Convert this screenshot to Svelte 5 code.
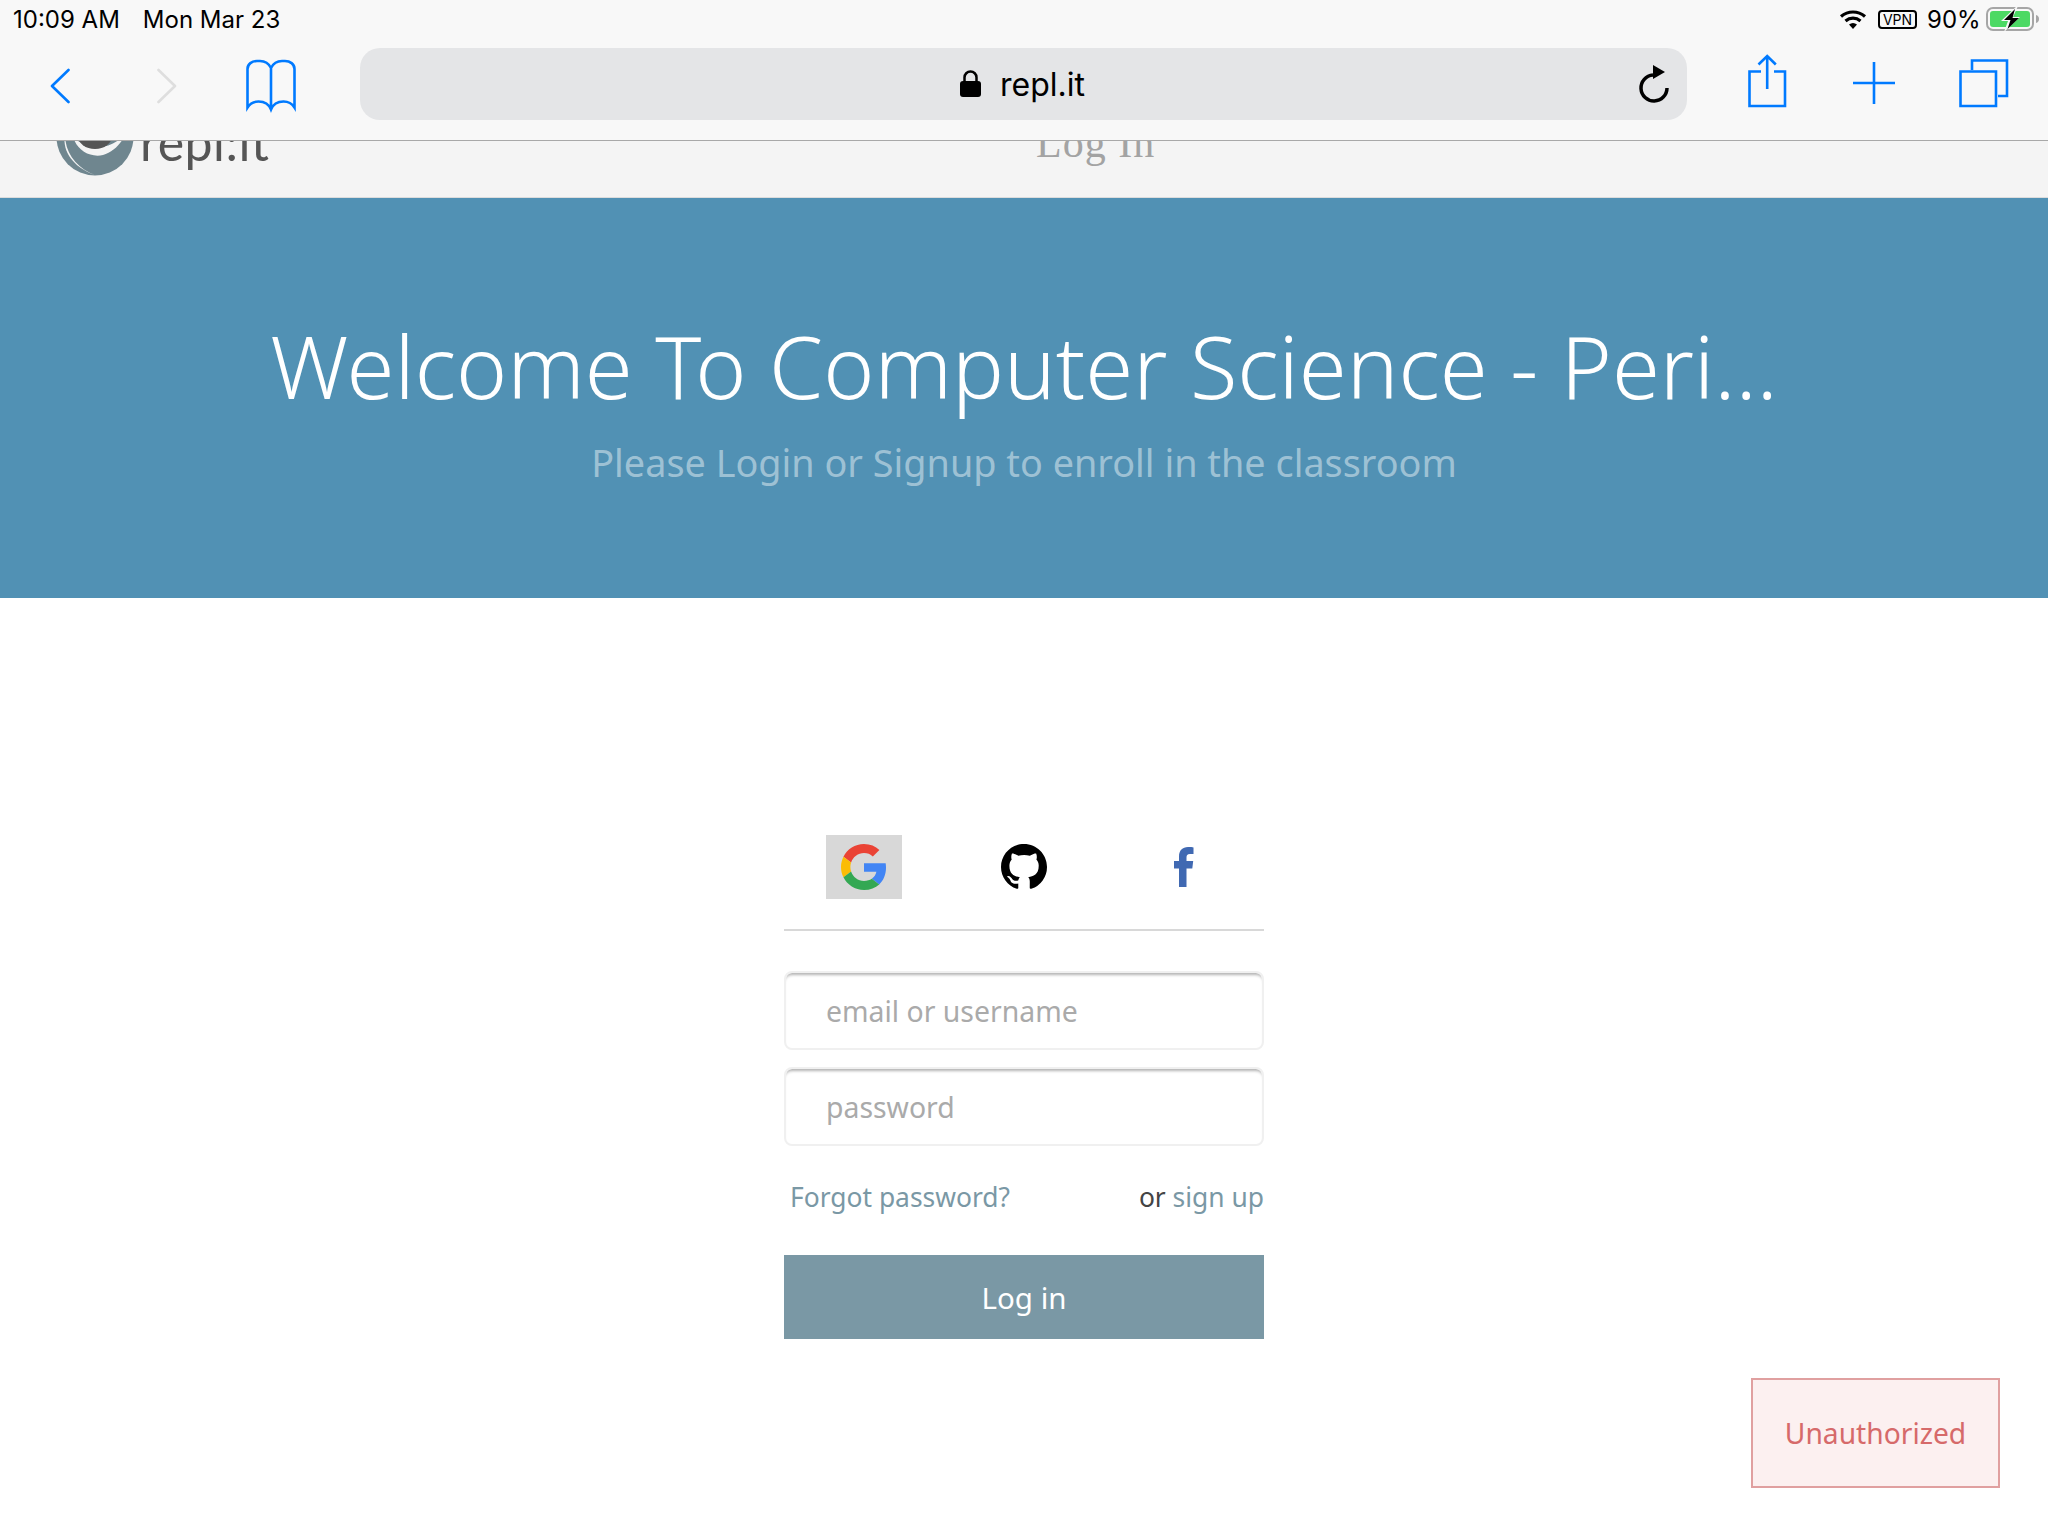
<script lang="ts">
    let email = $state("");
    let password = $state("");
</script>

<div class="chrome">
    <div class="status">
        <span class="time">10:09 AM</span>
        <span class="date">Mon Mar 23</span>
        <svg class="wifi" width="28" height="20" viewBox="0 0 28 20">
            <path d="M2 7.500c7-6 17-6 24 0M6.500 12c4.500-3.800 10.500-3.800 15 0" fill="none" stroke="#000" stroke-width="3.200" />
            <path d="M10 15.500c2.500-2 5.500-2 8 0L14 20z" />
        </svg>
        <span class="vpn">VPN</span>
        <span class="percent">90%</span>
        <svg class="battery" width="54" height="26" viewBox="0 0 54 26">
            <rect x="1" y="2" width="46" height="22" rx="6" fill="none" stroke="#a6a6a6" stroke-width="2" />
            <rect x="4" y="5" width="40" height="16" rx="3" fill="#4cd964" />
            <path d="M50 9c2 .5 3 2 3 4s-1 3.500-3 4z" fill="#a6a6a6" />
            <path d="M31 0 15 15h7l-4 11 16-15h-7l5-11z" fill="#f8f8f8" />
            <path d="M29 3 18 14h6.500l-3 9L33 12h-6.500z" />
        </svg>
    </div>
    <div class="toolbar">
        <svg class="back" width="20" height="72" viewBox="0 0 20 72">
            <path d="M18.500 22 2 38l16.500 16" />
        </svg>
        <svg class="forward" width="20" height="72" viewBox="0 0 20 72">
            <path d="M1.500 22 18 38 1.500 54" />
        </svg>
        <svg class="book" width="50" height="72" viewBox="0 0 50 72">
            <path d="M25 60V20c-2-4-6-7-11-7h-3c-5 0-9.500 3-9.500 8v38.500c2.500-4 6.500-6 11-6 5.500 0 10.500 3 12.500 8 2-5 7-8 12.500-8 4.500 0 8.500 2 11 6V21c0-5-4.500-8-9.500-8h-3c-5 0-9 3-11 7" />
        </svg>
        <div class="address">
            <svg width="21" height="28" viewBox="0 0 21 28">
                <rect x="0" y="11" width="21" height="16" rx="3" />
                <path d="M4.500 12V7.500a6 6 0 0 1 12 0V12" fill="none" stroke="#000" stroke-width="2.500" />
            </svg>
            <span>repl.it</span>
            <svg class="reload" width="32" height="72" viewBox="0 0 32 72">
                <path d="M15 27A13 13 0 1 0 29 40" fill="none" stroke="#000" stroke-width="3.500" />
                <path d="M15 17l12 7-12 7z" />
            </svg>
        </div>
        <svg class="share" width="40" height="72" viewBox="0 0 40 72">
            <path d="M13 23.500H1.500V58H37V23.500H26M19.200 41V8M10.500 16.500 19.200 8l8.600 8.500" />
        </svg>
        <svg class="plus" width="42" height="72" viewBox="0 0 42 72">
            <path d="M0 35h42M21 14v42" />
        </svg>
        <svg class="tabs" width="50" height="72" viewBox="0 0 50 72">
            <path d="M1.500 23.500H37V58H1.500zM13 22v-9.500h35V48h-9" />
        </svg>
    </div>
</div>

<header>
    <svg class="logo" width="78" height="78" viewBox="0 0 78 78">
        <circle cx="39" cy="39" r="38.500" fill="#6f868f" />
        <path d="M9 36c0 20 12 34 30 41C24 72 5 58 9 36z" fill="#f4f4f4" />
        <path d="M17 38c3 14 17 22 30 19 10-3 18-11 22-20-8 7-16 12-27 12-10 0-20-4-25-11z" fill="#f4f4f4" />
        <ellipse cx="39" cy="38" rx="17" ry="13" fill="#555" />
    </svg>
    <span class="wordmark">repl:it</span>
    <span class="login-title">Log In</span>
</header>

<section class="hero">
    <h1>Welcome To Computer Science - Peri...</h1>
    <p>Please Login or Signup to enroll in the classroom</p>
</section>

<main>
    <form onsubmit={(e) => e.preventDefault()}>
        <div class="providers">
            <button type="button" class="provider active" aria-label="Google">
                <svg width="46" height="46" viewBox="0 0 48 48">
                    <path fill="#EA4335" d="M24 9.500c3.540 0 6.710 1.220 9.210 3.600l6.850-6.850C35.900 2.380 30.470 0 24 0 14.620 0 6.510 5.380 2.560 13.220l7.980 6.190C12.430 13.720 17.740 9.500 24 9.500z" />
                    <path fill="#4285F4" d="M46.980 24.550c0-1.570-.15-3.090-.38-4.550H24v9.020h12.940c-.58 2.960-2.260 5.480-4.780 7.180l7.730 6c4.510-4.180 7.090-10.360 7.090-17.650z" />
                    <path fill="#FBBC05" d="M10.530 28.590c-.48-1.450-.76-2.990-.76-4.590s.27-3.140.76-4.590l-7.980-6.190C.92 16.460 0 20.120 0 24c0 3.880.92 7.540 2.560 10.780l7.970-6.190z" />
                    <path fill="#34A853" d="M24 48c6.480 0 11.930-2.130 15.890-5.810l-7.730-6c-2.150 1.450-4.920 2.300-8.160 2.300-6.260 0-11.570-4.220-13.470-9.910l-7.980 6.190C6.510 42.620 14.620 48 24 48z" />
                </svg>
            </button>
            <button type="button" class="provider" aria-label="GitHub">
                <svg width="46" height="46" viewBox="0 0 16 16">
                    <path d="M8 0C3.580 0 0 3.580 0 8c0 3.540 2.290 6.530 5.470 7.590.4.070.55-.17.55-.38 0-.19-.01-.82-.01-1.490-2.010.37-2.530-.49-2.690-.94-.09-.23-.48-.94-.82-1.130-.28-.15-.68-.52-.01-.53.63-.01 1.080.58 1.230.82.72 1.210 1.870.87 2.330.66.070-.52.28-.87.51-1.070-1.780-.2-3.640-.89-3.640-3.950 0-.87.31-1.590.82-2.150-.08-.2-.36-1.020.08-2.120 0 0 .67-.21 2.200.82.64-.18 1.320-.27 2-.27s1.360.09 2 .27c1.530-1.040 2.200-.82 2.200-.82.44 1.100.16 1.920.08 2.120.51.56.82 1.270.82 2.150 0 3.070-1.870 3.750-3.650 3.950.29.25.54.73.54 1.480 0 1.070-.01 1.930-.01 2.200 0 .21.15.46.55.38A8.010 8.010 0 0 0 16 8c0-4.420-3.580-8-8-8z" />
                </svg>
            </button>
            <button type="button" class="provider" aria-label="Facebook">
                <svg width="20" height="40" viewBox="0 0 20 40">
                    <path fill="#4069b2" d="M5 40V21.500H0V14h5V9.500C5 3.500 8.500 0 14 0c2.500 0 4.500.2 5.500.4v6.600h-3.500c-2.800 0-3.500 1.300-3.500 3.500V14h6.700l-.9 7.500h-5.800V40z" />
                </svg>
            </button>
        </div>

        <input type="text" placeholder="email or username" bind:value={email} />
        <input type="password" placeholder="password" bind:value={password} />

        <div class="links">
            <a href="#forgot">Forgot password?</a>
            <span>or <a href="#signup">sign up</a></span>
        </div>

        <button type="submit" class="submit">Log in</button>
    </form>
</main>

<div class="toast">Unauthorized</div>

<style>
    :global(body) {
        background: #fff;
        font-family: "Noto Sans", "Open Sans", sans-serif;
    }

    .chrome {
        height: 140px;
        background: #f8f8f8;
        border-bottom: 1px solid #a8a8a8;
        font-family: Inter, "Liberation Sans", sans-serif;
    }

    .status {
        display: flex;
        align-items: center;
        height: 38px;
        padding: 0 8px 2px 13px;
        font-size: 24px;
        color: #000;
    }

    .date {
        margin-left: 23px;
        margin-right: auto;
    }

    .wifi {
        margin-right: 11px;
    }

    .vpn {
        box-sizing: border-box;
        width: 39px;
        height: 19px;
        border: 2px solid #000;
        border-radius: 4px;
        font-size: 14px;
        line-height: 15px;
        text-align: center;
    }

    .percent {
        margin-left: 10px;
        width: 51px;
    }

    .battery {
        margin-left: 8px;
    }

    .toolbar {
        display: flex;
        align-items: center;
        height: 72px;
        padding: 8px 0 0 50px;
    }

    .toolbar > svg path {
        fill: none;
        stroke: #007aff;
        stroke-width: 2.600;
    }

    .back path,
    .forward path {
        stroke-linecap: round;
        stroke-linejoin: round;
    }

    .toolbar > svg.forward path {
        stroke: #dedede;
    }

    .forward {
        margin-left: 87px;
    }

    .book {
        margin-left: 69px;
    }

    .address {
        display: flex;
        align-items: center;
        box-sizing: border-box;
        width: 1327px;
        height: 72px;
        margin-left: 64px;
        padding-left: 600px;
        background: #e4e5e7;
        border-radius: 20px;
        font-size: 32px;
        color: #000;
    }

    .address span {
        margin-left: 19px;
    }

    .reload {
        margin-left: auto;
        margin-right: 17px;
    }

    .share {
        margin-left: 61px;
    }

    .plus {
        margin-left: 65px;
    }

    .tabs {
        margin-left: 64px;
    }

    header {
        display: flex;
        align-items: flex-end;
        box-sizing: border-box;
        height: 57px;
        padding: 0 0 21px 56px;
        overflow: hidden;
        background: #f4f4f4;
        border-bottom: 1px solid #dcdcdc;
    }

    .logo {
        flex: none;
    }

    .wordmark {
        margin-left: 6px;
        margin-bottom: 11px;
        width: 130px;
        font-family: Lato, sans-serif;
        font-weight: 400;
        font-size: 50px;
        line-height: 46px;
        letter-spacing: 0.500px;
        color: #555;
    }

    .login-title {
        margin-left: 766px;
        margin-bottom: 10px;
        font-family: "Liberation Serif", serif;
        font-size: 42px;
        line-height: 46px;
        letter-spacing: 1px;
        color: #a3a3a3;
    }

    .hero {
        box-sizing: border-box;
        height: 400px;
        padding-top: 109px;
        background: #5191b4;
        text-align: center;
    }

    h1 {
        margin: 0;
        font-size: 86.800px;
        font-weight: 300;
        line-height: 116px;
        color: #fff;
    }

    p {
        margin: 13px 0 0;
        font-size: 37.800px;
        font-weight: 400;
        line-height: 54px;
        color: rgba(255, 255, 255, 0.45);
    }

    main {
        display: flex;
        justify-content: center;
        padding-top: 237px;
    }

    form {
        display: flex;
        flex-direction: column;
        width: 480px;
    }

    .providers {
        display: grid;
        grid-template-columns: repeat(3, 160px);
        padding-bottom: 30px;
        margin-bottom: 40px;
        border-bottom: 2px solid #d8d8d8;
    }

    .provider {
        display: flex;
        align-items: center;
        justify-content: center;
        width: 76px;
        height: 64px;
        justify-self: center;
        padding: 0;
        background: none;
        border: 0;
        cursor: pointer;
    }

    .provider.active {
        background: #d8d8d8;
    }

    input {
        box-sizing: border-box;
        width: 100%;
        height: 79px;
        margin-bottom: 17px;
        padding: 0 40px;
        border: 2px solid #f0f0f0;
        border-radius: 8px;
        box-shadow: inset 0 4px 3px -2px #b4b4b4;
        font-family: inherit;
        font-size: 28.400px;
        color: #444;
        outline: none;
    }

    input:last-of-type {
        margin-bottom: 0;
    }

    input::placeholder {
        color: #aaa;
    }

    .links {
        display: flex;
        align-items: center;
        justify-content: space-between;
        box-sizing: border-box;
        height: 109px;
        padding: 0 0 8px 6px;
        font-size: 26.400px;
        color: #444;
    }

    a {
        color: #7a98a5;
        text-decoration: none;
    }

    .submit {
        height: 84px;
        background: #7a98a5;
        border: 0;
        font-family: inherit;
        font-size: 29.500px;
        color: #fff;
        cursor: pointer;
    }

    .toast {
        position: absolute;
        top: 1378px;
        left: 1751px;
        display: flex;
        align-items: center;
        justify-content: center;
        box-sizing: border-box;
        width: 249px;
        height: 110px;
        background: #fcf0f0;
        border: 2px solid #e0a0a0;
        font-size: 28.200px;
        color: #d66a6a;
    }
</style>
